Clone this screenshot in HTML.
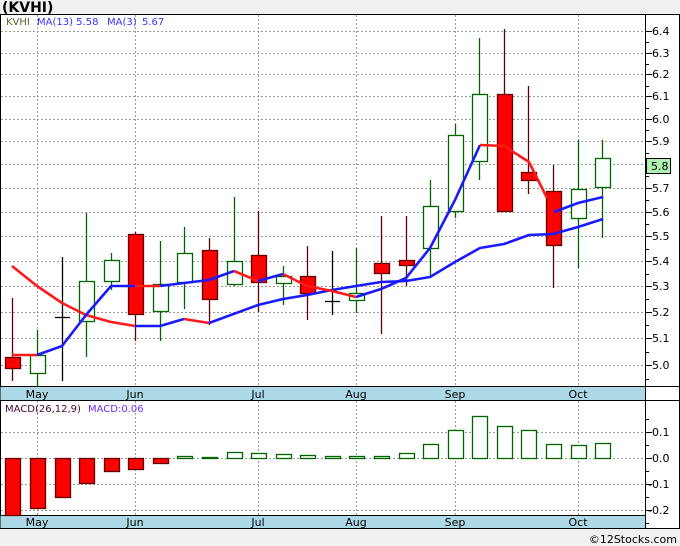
<!DOCTYPE html>
<html><head><meta charset="utf-8"><style>
html,body{margin:0;padding:0;background:#f0f0f0;}
svg{display:block;font-family:"DejaVu Sans","Liberation Sans",sans-serif;}
</style></head><body>
<svg width="680" height="546" viewBox="0 0 680 546" xmlns="http://www.w3.org/2000/svg">
<rect x="0" y="0" width="680" height="546" fill="#f0f0f0"/>
<text x="2" y="12" font-size="14" font-weight="bold" fill="#000">(KVHI)</text>
<rect x="0.5" y="14.5" width="679" height="514" fill="#fff" stroke="#000"/>
<!-- bands -->
<rect x="0.5" y="387" width="645" height="13" fill="#add8e6"/>
<rect x="0.5" y="515" width="645" height="13" fill="#add8e6"/>
<g stroke="#000" stroke-width="1">
<line x1="0" y1="386.5" x2="680" y2="386.5"/>
<line x1="0" y1="400.5" x2="680" y2="400.5"/>
<line x1="0" y1="515.5" x2="645" y2="515.5"/>
<line x1="0" y1="528.5" x2="680" y2="528.5"/>
<line x1="645.5" y1="14" x2="645.5" y2="528"/>
</g>
<!-- grids -->
<g stroke="#999" stroke-dasharray="2,2" stroke-width="1">
<line x1="1" y1="31.5" x2="645" y2="31.5"/><line x1="1" y1="53.5" x2="645" y2="53.5"/>
<line x1="1" y1="74.5" x2="645" y2="74.5"/><line x1="1" y1="96.5" x2="645" y2="96.5"/>
<line x1="1" y1="119.5" x2="645" y2="119.5"/><line x1="1" y1="141.5" x2="645" y2="141.5"/>
<line x1="1" y1="164.5" x2="645" y2="164.5"/><line x1="1" y1="188.5" x2="645" y2="188.5"/>
<line x1="1" y1="212.5" x2="645" y2="212.5"/><line x1="1" y1="236.5" x2="645" y2="236.5"/>
<line x1="1" y1="261.5" x2="645" y2="261.5"/><line x1="1" y1="286.5" x2="645" y2="286.5"/>
<line x1="1" y1="312.5" x2="645" y2="312.5"/><line x1="1" y1="338.5" x2="645" y2="338.5"/>
<line x1="1" y1="365.5" x2="645" y2="365.5"/>
<line x1="1" y1="432.5" x2="645" y2="432.5"/><line x1="1" y1="458.5" x2="645" y2="458.5"/>
<line x1="1" y1="484.5" x2="645" y2="484.5"/><line x1="1" y1="510.5" x2="645" y2="510.5"/>
<line x1="37.5" y1="15" x2="37.5" y2="387"/><line x1="135.5" y1="15" x2="135.5" y2="387"/>
<line x1="258.5" y1="15" x2="258.5" y2="387"/><line x1="356.5" y1="15" x2="356.5" y2="387"/>
<line x1="455.5" y1="15" x2="455.5" y2="387"/><line x1="578.5" y1="15" x2="578.5" y2="387"/>
<line x1="37.5" y1="401" x2="37.5" y2="515"/><line x1="135.5" y1="401" x2="135.5" y2="515"/>
<line x1="258.5" y1="401" x2="258.5" y2="515"/><line x1="356.5" y1="401" x2="356.5" y2="515"/>
<line x1="455.5" y1="401" x2="455.5" y2="515"/><line x1="578.5" y1="401" x2="578.5" y2="515"/>
</g>
<!-- axis ticks -->
<g stroke="#000" stroke-width="1">
<line x1="645" y1="31.5" x2="652" y2="31.5"/><line x1="645" y1="53.5" x2="652" y2="53.5"/>
<line x1="645" y1="74.5" x2="652" y2="74.5"/><line x1="645" y1="96.5" x2="652" y2="96.5"/>
<line x1="645" y1="119.5" x2="652" y2="119.5"/><line x1="645" y1="141.5" x2="652" y2="141.5"/>
<line x1="645" y1="188.5" x2="652" y2="188.5"/>
<line x1="645" y1="212.5" x2="652" y2="212.5"/><line x1="645" y1="236.5" x2="652" y2="236.5"/>
<line x1="645" y1="261.5" x2="652" y2="261.5"/><line x1="645" y1="286.5" x2="652" y2="286.5"/>
<line x1="645" y1="312.5" x2="652" y2="312.5"/><line x1="645" y1="338.5" x2="652" y2="338.5"/>
<line x1="645" y1="365.5" x2="652" y2="365.5"/>
<line x1="645" y1="42.5" x2="649" y2="42.5"/><line x1="645" y1="64.5" x2="649" y2="64.5"/>
<line x1="645" y1="86.5" x2="649" y2="86.5"/><line x1="645" y1="108.5" x2="649" y2="108.5"/>
<line x1="645" y1="130.5" x2="649" y2="130.5"/><line x1="645" y1="153.5" x2="649" y2="153.5"/>
<line x1="645" y1="176.5" x2="649" y2="176.5"/><line x1="645" y1="200.5" x2="649" y2="200.5"/>
<line x1="645" y1="224.5" x2="649" y2="224.5"/><line x1="645" y1="249.5" x2="649" y2="249.5"/>
<line x1="645" y1="274.5" x2="649" y2="274.5"/><line x1="645" y1="299.5" x2="649" y2="299.5"/>
<line x1="645" y1="325.5" x2="649" y2="325.5"/><line x1="645" y1="352.5" x2="649" y2="352.5"/>
<line x1="645" y1="379.5" x2="649" y2="379.5"/>
<line x1="645" y1="432.5" x2="652" y2="432.5"/><line x1="645" y1="458.5" x2="652" y2="458.5"/>
<line x1="645" y1="484.5" x2="652" y2="484.5"/><line x1="645" y1="510.5" x2="652" y2="510.5"/>
<line x1="645" y1="419.5" x2="649" y2="419.5"/><line x1="645" y1="445.5" x2="649" y2="445.5"/>
<line x1="645" y1="471.5" x2="649" y2="471.5"/><line x1="645" y1="497.5" x2="649" y2="497.5"/>
<line x1="645" y1="523.5" x2="649" y2="523.5"/>
</g>
<g font-size="11" fill="#000">
<text x="652" y="35">6.4</text><text x="652" y="57">6.3</text><text x="652" y="78">6.2</text>
<text x="652" y="100">6.1</text><text x="652" y="123">6.0</text><text x="652" y="145">5.9</text>
<text x="652" y="192">5.7</text><text x="652" y="216">5.6</text><text x="652" y="240">5.5</text>
<text x="652" y="265">5.4</text><text x="652" y="290">5.3</text><text x="652" y="316">5.2</text>
<text x="652" y="342">5.1</text><text x="652" y="369">5.0</text>
<text x="652" y="436">0.1</text><text x="652" y="462">0.0</text>
<text x="648" y="488">-0.1</text><text x="648" y="514">-0.2</text>
</g>
<rect x="646.5" y="158.5" width="24" height="15" fill="#b0f0b0" stroke="#000"/>
<text x="651" y="170" font-size="11" fill="#000">5.8</text>
<!-- month labels -->
<g font-size="11" fill="#000" text-anchor="middle">
<text x="37" y="398">May</text><text x="135" y="398">Jun</text><text x="258" y="398">Jul</text>
<text x="356" y="398">Aug</text><text x="455" y="398">Sep</text><text x="578" y="398">Oct</text>
<text x="37" y="526">May</text><text x="135" y="526">Jun</text><text x="258" y="526">Jul</text>
<text x="356" y="526">Aug</text><text x="455" y="526">Sep</text><text x="578" y="526">Oct</text>
</g>
<text x="6" y="25" font-size="10" fill="#556b2f">KVHI</text>
<text x="37" y="25" font-size="10" fill="#3333ff">MA(13)  5.58</text>
<text x="107" y="25" font-size="10" fill="#3333ff">MA(3)</text>
<text x="142" y="25" font-size="10" fill="#3333ff">5.67</text>
<text x="5" y="412" font-size="10" fill="#4b0033">MACD(26,12,9)</text>
<text x="88" y="412" font-size="10" fill="#6633ff">MACD:0.06</text>
<!-- wicks -->
<g stroke-width="1.3">
<line x1="12.5" y1="298" x2="12.5" y2="381" stroke="#660000"/>
<line x1="37.5" y1="330" x2="37.5" y2="387" stroke="#006400"/>
<line x1="62.5" y1="257" x2="62.5" y2="381" stroke="#000"/>
<line x1="55" y1="317.5" x2="70" y2="317.5" stroke="#000"/>
<line x1="86.5" y1="213" x2="86.5" y2="357" stroke="#006400"/>
<line x1="111.5" y1="253" x2="111.5" y2="290" stroke="#006400"/>
<line x1="135.5" y1="232" x2="135.5" y2="341" stroke="#660000"/>
<line x1="160.5" y1="241" x2="160.5" y2="341" stroke="#006400"/>
<line x1="184.5" y1="227" x2="184.5" y2="309" stroke="#006400"/>
<line x1="209.5" y1="238" x2="209.5" y2="325" stroke="#660000"/>
<line x1="234.5" y1="197" x2="234.5" y2="286" stroke="#006400"/>
<line x1="258.5" y1="211" x2="258.5" y2="312" stroke="#660000"/>
<line x1="283.5" y1="266" x2="283.5" y2="305" stroke="#006400"/>
<line x1="307.5" y1="246" x2="307.5" y2="320" stroke="#660000"/>
<line x1="332.5" y1="251" x2="332.5" y2="315" stroke="#000"/>
<line x1="325" y1="301.5" x2="340" y2="301.5" stroke="#000"/>
<line x1="356.5" y1="248" x2="356.5" y2="313" stroke="#006400"/>
<line x1="381.5" y1="216" x2="381.5" y2="334" stroke="#660000"/>
<line x1="406.5" y1="216" x2="406.5" y2="286" stroke="#660000"/>
<line x1="430.5" y1="180" x2="430.5" y2="276" stroke="#006400"/>
<line x1="455.5" y1="124" x2="455.5" y2="218" stroke="#006400"/>
<line x1="479.5" y1="38" x2="479.5" y2="180" stroke="#006400"/>
<line x1="504.5" y1="29" x2="504.5" y2="212" stroke="#660000"/>
<line x1="528.5" y1="86" x2="528.5" y2="194" stroke="#660000"/>
<line x1="553.5" y1="165" x2="553.5" y2="288" stroke="#660000"/>
<line x1="578.5" y1="140" x2="578.5" y2="268" stroke="#006400"/>
<line x1="602.5" y1="140" x2="602.5" y2="238" stroke="#006400"/>
</g>
<!-- bodies -->
<g stroke-width="1.3">
<g fill="#ff0000" stroke="#660000">
<rect x="5.5" y="357.5" width="15" height="11"/>
<rect x="128.5" y="234.5" width="15" height="80"/>
<rect x="202.5" y="250.5" width="15" height="49"/>
<rect x="251.5" y="255.5" width="15" height="27"/>
<rect x="300.5" y="276.5" width="15" height="17"/>
<rect x="374.5" y="263.5" width="15" height="10"/>
<rect x="399.5" y="260.5" width="15" height="5"/>
<rect x="497.5" y="94.5" width="15" height="117"/>
<rect x="521.5" y="172.5" width="15" height="8"/>
<rect x="546.5" y="191.5" width="15" height="54"/>
</g>
<g fill="#fff" stroke="#006400">
<rect x="30.5" y="355.5" width="15" height="18"/>
<rect x="79.5" y="281.5" width="15" height="40"/>
<rect x="104.5" y="260.5" width="15" height="21"/>
<rect x="153.5" y="284.5" width="15" height="27"/>
<rect x="177.5" y="253.5" width="15" height="29"/>
<rect x="227.5" y="261.5" width="15" height="23"/>
<rect x="276.5" y="276.5" width="15" height="7"/>
<rect x="349.5" y="293.5" width="15" height="7"/>
<rect x="423.5" y="206.5" width="15" height="42"/>
<rect x="448.5" y="135.5" width="15" height="76"/>
<rect x="472.5" y="94.5" width="15" height="67"/>
<rect x="571.5" y="189.5" width="15" height="29"/>
<rect x="595.5" y="158.5" width="15" height="29"/>
</g>
</g>
<!-- MA lines -->
<g stroke-width="2.6" fill="none" stroke-linejoin="round">
<polyline stroke="#ff1a1a" points="12,266 37,286 62,303 86,315 111,322 135,326"/>
<polyline stroke="#1a1aff" points="135,326 160,326 184,319"/>
<polyline stroke="#ff1a1a" points="184,319 209,323"/>
<polyline stroke="#1a1aff" points="209,323 258,305 283,299 307,295 332,290 356,286 381,282 406,281 430,277 455,262 480,248 504,244 529,235 553,234 578,227 603,219"/>
<polyline stroke="#ff1a1a" points="12,355 37,355"/>
<polyline stroke="#1a1aff" points="37,355 62,346 86,315 111,286 135,286"/>
<polyline stroke="#ff1a1a" points="135,286 160,286"/>
<polyline stroke="#1a1aff" points="160,286 184,283 209,280 234,271"/>
<polyline stroke="#ff1a1a" points="234,271 258,281"/>
<polyline stroke="#1a1aff" points="258,281 283,274"/>
<polyline stroke="#ff1a1a" points="283,274 307,286 332,291 356,297"/>
<polyline stroke="#1a1aff" points="356,297 381,289 406,278 430,248 455,200 480,145"/>
<polyline stroke="#ff1a1a" points="480,145 504,146 529,162 547,198"/>
<polyline stroke="#1a1aff" points="554,212 578,203 603,197"/>
</g>
<!-- MACD bars -->
<g stroke-width="1.3">
<g fill="#ff0000" stroke="#660000">
<rect x="5.5" y="458.5" width="15" height="57"/>
<rect x="30.5" y="458.5" width="15" height="50"/>
<rect x="55.5" y="458.5" width="15" height="39"/>
<rect x="79.5" y="458.5" width="15" height="25"/>
<rect x="104.5" y="458.5" width="15" height="13"/>
<rect x="128.5" y="458.5" width="15" height="11"/>
<rect x="153.5" y="458.5" width="15" height="5"/>
</g>
<g fill="#fff" stroke="#006400">
<rect x="177.5" y="456.5" width="15" height="2"/>
<rect x="202.5" y="457.5" width="15" height="1"/>
<rect x="227.5" y="452.5" width="15" height="6"/>
<rect x="251.5" y="453.5" width="15" height="5"/>
<rect x="276.5" y="454.5" width="15" height="4"/>
<rect x="300.5" y="455.5" width="15" height="3"/>
<rect x="325.5" y="456.5" width="15" height="2"/>
<rect x="349.5" y="456.5" width="15" height="2"/>
<rect x="374.5" y="456.5" width="15" height="2"/>
<rect x="399.5" y="453.5" width="15" height="5"/>
<rect x="423.5" y="444.5" width="15" height="14"/>
<rect x="448.5" y="430.5" width="15" height="28"/>
<rect x="472.5" y="416.5" width="15" height="42"/>
<rect x="497.5" y="426.5" width="15" height="32"/>
<rect x="521.5" y="430.5" width="15" height="28"/>
<rect x="546.5" y="444.5" width="15" height="14"/>
<rect x="571.5" y="445.5" width="15" height="13"/>
<rect x="595.5" y="443.5" width="15" height="15"/>
</g>
</g>
<text x="677" y="543" font-size="11" fill="#000" text-anchor="end">©12Stocks.com</text>
</svg>
</body></html>
